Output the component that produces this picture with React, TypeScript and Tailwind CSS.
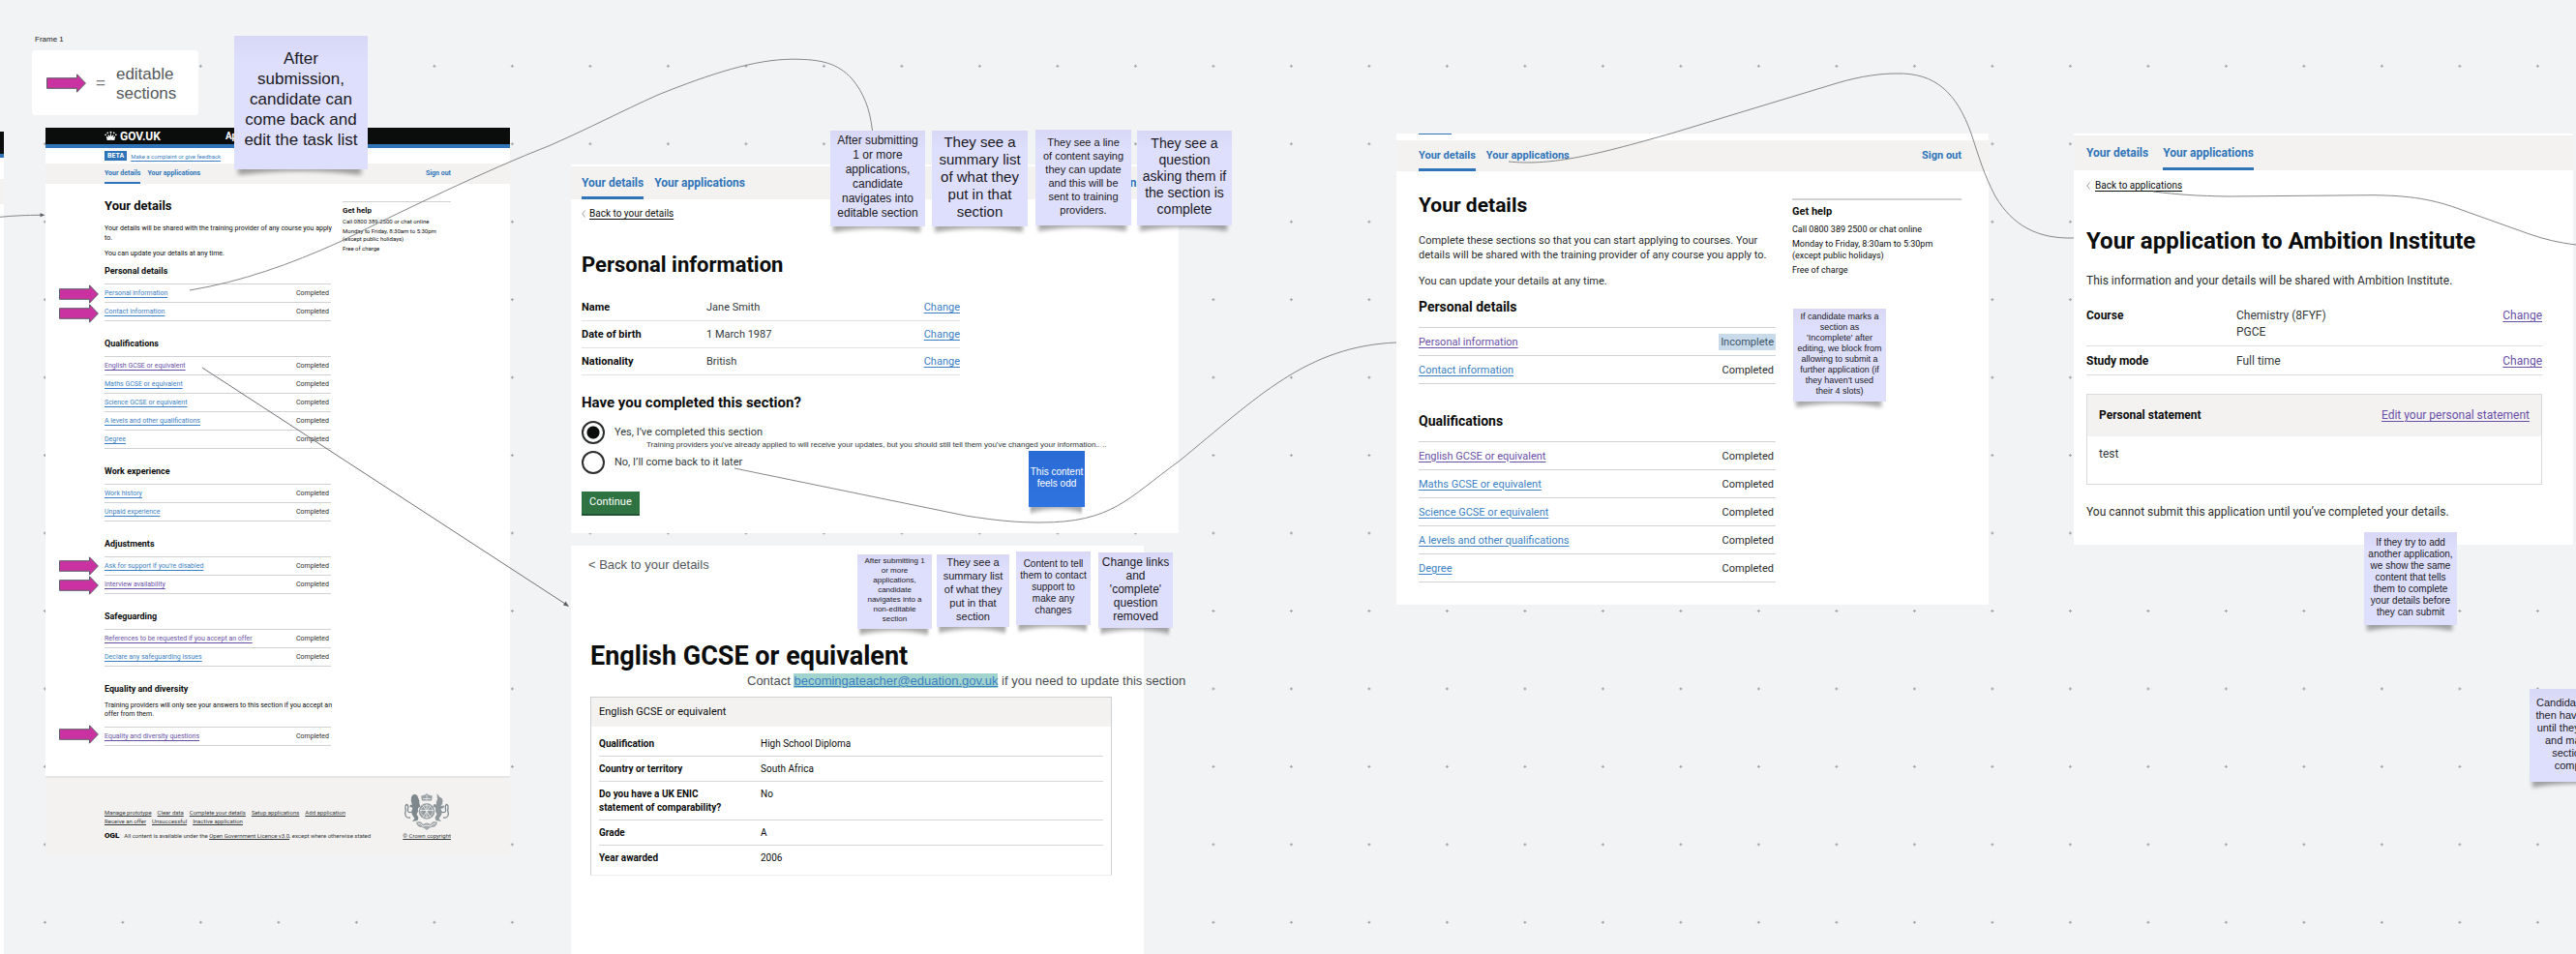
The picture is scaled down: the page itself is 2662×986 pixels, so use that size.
import type { ReactNode } from "react";

const link = "text-[#3b7fc4] underline underline-offset-2";
const visited = "text-[#6a4fa8] underline underline-offset-2";

type Task = { name: string; seen?: boolean; status?: string };

/* ---------- board furniture ---------- */

function Grid() {
  return (
    <svg className="absolute inset-0 h-full w-full" aria-hidden="true">
      <defs>
        <pattern id="plus" width="80.5" height="80.45" patternUnits="userSpaceOnUse" x="6.1" y="28.1">
          <path d="M38.8 40.2h3M40.3 38.7v3" stroke="#9a9da1" strokeWidth="1" />
        </pattern>
      </defs>
      <rect width="100%" height="100%" fill="url(#plus)" />
    </svg>
  );
}

function Arrow({ className }: { className: string }) {
  return (
    <svg className={className} viewBox="0 0 41 20" aria-hidden="true">
      <path d="M.5 4.7H31.5V.8L40.4 10L31.5 19.2V15.3H.5Z" fill="#c932a0" stroke="#5b5f66" strokeWidth="1" />
    </svg>
  );
}

function Note({ place, text, tone = "lilac", pad = "pb-[3px]" }: { place: string; text: string; tone?: "lilac" | "blue"; pad?: string }) {
  const paper =
    tone === "blue"
      ? "bg-linear-to-b from-[#2a6ad4] to-[#2f74e0] text-white"
      : "bg-linear-to-b from-[#d8d8f6] to-[#dedefd] to-20% text-[#1a1a24]";
  return (
    <div className={`absolute ${place}`}>
      <svg className="absolute -bottom-3 left-0 h-5 w-full overflow-visible" viewBox="0 0 100 20" preserveAspectRatio="none" aria-hidden="true">
        <path d="M3 0H95V14Q50 6 3 14Z" fill="#000" opacity="0.34" style={{ filter: "blur(2px)" }} />
      </svg>
      <div className={`relative flex h-full items-center justify-center whitespace-pre text-center ${pad} ${paper}`}>
        <p>{text}</p>
      </div>
    </div>
  );
}

function Connectors() {
  return (
    <svg className="pointer-events-none absolute inset-0 h-full w-full" fill="none" stroke="#85878a" strokeWidth="1" aria-hidden="true">
      <path d="M0 224.3C15 222.8 28 222.4 42 222.3" />
      <path d="M46.5 222.3L41.5 220.3V224.3Z" fill="#5b5f66" stroke="none" />
      <path d="M196 300C250 291 300 273 350 250.500C420 216 500 177 569 150C610 132 640 116 680 98C735 76 780 61.500 818 61.200C850 61 866 66 880 81C892 95 899 112 901.500 135" />
      <path d="M209 380L584 624" stroke="#6f7276" />
      <path d="M588 627L582 625.500L584.500 621.500Z" fill="#5b5f66" stroke="none" />
      <path d="M759 484L998 533C1030 538 1050 540 1075 540C1150 540 1165 515 1218 477C1300 410 1350 358 1443 354" />
      <path d="M1559 167C1600 171 1640 163 1730 137L1898 86C1925 78 1945 76 1960 76C2000 75 2022 96 2037 138C2046 165 2050 180 2062 203C2080 233 2105 247 2143 246" />
      <path d="M2225 198C2250 201 2270 202.500 2303 203L2451 201.700C2490 202 2515 206 2544 217L2614 242C2630 247.500 2645 251 2662 253" />
    </svg>
  );
}

function CoatOfArms() {
  return (
    <svg className="h-10 w-12" viewBox="0 0 48 40" fill="#7d878c" aria-hidden="true">
      <path d="M19 8.500L18.200 4.500Q18.500 2.600 20.500 3.200Q22 1.800 23.400 2.500V1H24.600V2.500Q26 1.800 27.500 3.200Q29.500 2.600 29.800 4.500L29 8.500Z" opacity=".75" />
      <path d="M20 6.500h8M24 3v5" stroke="#f3f2f1" strokeWidth=".7" />
      <circle cx="24" cy="19.500" r="8.300" opacity=".8" />
      <path d="M24 12v15M17 18.500h14M20 13.500l8 12M28 13.500l-8 12" stroke="#f3f2f1" strokeWidth=".8" />
      <circle cx="24" cy="19.500" r="6.200" fill="none" stroke="#f3f2f1" strokeWidth=".6" />
      <path d="M8 5Q9 1.800 11.500 2Q14.500 2 15 5.500Q17 8 16.500 12L17.500 14.500L15 16Q15.500 20 13.500 22.500L15.500 26L14.500 29L9 30L11.500 27L9 23Q7.500 20 9.500 16L6 14.500L7.500 12.500L9 13Q7 9 8 5Z" />
      <path d="M9 20Q3.500 22 4.500 17Q5.500 13 3 12.500Q1.500 13.500 2 16Q2.800 19 1.600 21.500Q2 27 7 26" fill="none" stroke="#7d878c" strokeWidth="1.300" />
      <path d="M34.500 1L37.500 5Q40.500 5.500 40.500 9Q40.500 12 38.500 14L42 13.500L41.500 16L38.500 17Q40.500 20.500 39 23.500L36.500 27L39 30L33.500 29L32.500 26L34.500 22.500Q32.500 20 33 16L30.500 14.500L31.500 12L34 12.500Q33.500 9.500 35 7Z" opacity=".85" />
      <path d="M39 20Q44.500 22 43.500 17Q42.500 13 45 12.500Q46.500 13.500 46 16Q45.200 19 46.400 21.500Q46 27 41 26" fill="none" stroke="#7d878c" strokeWidth="1.300" />
      <path d="M13 31Q18 28.500 20 33Q24 30 28 33Q30 28.500 35 31Q34 36 29 36Q26 37 24 39Q22 37 19 36Q14 36 13 31Z" opacity=".7" />
      <path d="M15 32Q18 32 20 35Q24 33 28 35Q30 32 33 32" fill="none" stroke="#f3f2f1" strokeWidth=".9" />
    </svg>
  );
}

function Crown() {
  return (
    <svg className="h-[11px] w-[13px]" viewBox="0 0 26 22" fill="#fff" aria-hidden="true">
      <circle cx="13" cy="3.500" r="2" />
      <circle cx="6.500" cy="4.500" r="1.700" />
      <circle cx="19.500" cy="4.500" r="1.700" />
      <circle cx="2.300" cy="8.500" r="1.700" />
      <circle cx="23.700" cy="8.500" r="1.700" />
      <path d="M3.500 11L5.500 20Q13 18.500 20.500 20L22.500 11L17.500 14L19.500 7.500L14 12L13.800 6.500H12.200L12 12L6.500 7.500L8.500 14Z" />
    </svg>
  );
}

/* ---------- shared page parts ---------- */

function Tabs({ active, className, tab, signOut, bar = "h-[3px]" }: { active: 0 | 1; className: string; tab: string; signOut?: ReactNode; bar?: string }) {
  return (
    <nav className={`flex items-stretch bg-[#f3f2f1] font-bold text-[#2f74b8] ${className}`}>
      <div className={`flex flex-1 ${tab}`}>
        {["Your details", "Your applications"].map((label, i) => (
          <a key={label} href="#" className="relative flex items-center">
            {label}
            {i === active && <span className={`absolute inset-x-0 bottom-0 bg-[#2f74b8] ${bar}`} />}
          </a>
        ))}
      </div>
      {signOut}
    </nav>
  );
}

function TaskList({ title, tasks, intro, heading, row, introClass = "" }: { title: string; tasks: Task[]; intro?: string; heading: string; row: string; introClass?: string }) {
  return (
    <section>
      <h2 className={`font-bold ${heading}`}>{title}</h2>
      {intro && <p className={introClass}>{intro}</p>}
      <ul className="border-t border-[#cfd1d2]">
        {tasks.map((t) => (
          <li key={t.name} className={`flex items-center justify-between border-b border-[#cfd1d2] ${row}`}>
            <a href="#" className={t.seen ? visited : link}>
              {t.name}
            </a>
            {t.status ? (
              <span className="bg-[#c9dbeb] px-0.5 py-px text-[#3d5468]">{t.status}</span>
            ) : (
              <span className="pr-0.5 text-[#2b2d2e]">Completed</span>
            )}
          </li>
        ))}
      </ul>
    </section>
  );
}

function BackLink({ children, className }: { children: string; className: string }) {
  return (
    <a href="#" className={`flex items-center ${className}`}>
      <svg className="h-2 w-1" viewBox="0 0 4 8" fill="none" stroke="#9a9da1" aria-hidden="true">
        <path d="M3.500 .5L.8 4L3.500 7.500" />
      </svg>
      <span className="underline underline-offset-2">{children}</span>
    </a>
  );
}

const personal: Task[] = [{ name: "Personal information" }, { name: "Contact information" }];
const qualifications: Task[] = [
  { name: "English GCSE or equivalent", seen: true },
  { name: "Maths GCSE or equivalent" },
  { name: "Science GCSE or equivalent" },
  { name: "A levels and other qualifications" },
  { name: "Degree" },
];

/* ---------- screens ---------- */

function TaskListPage() {
  const heading = "mt-[17px] mb-[7px] text-[9px] leading-[12px]";
  const row = "h-[19px] text-[7px]";
  return (
    <article className="absolute top-[132px] left-[47px] w-[480px] bg-white font-[Roboto,sans-serif] text-[#0b0c0c]">
      <header className="flex h-[21px] items-center border-b-4 border-[#2f74b8] bg-[#0b0c0c] pl-[61px] text-[12px] leading-none font-bold text-white">
        <Crown />
        <span className="w-[112px] pl-[3px]">GOV.UK</span>
        <span className="text-[10px]">Apply</span>
      </header>
      <div className="flex h-4 items-center gap-1 pl-[61px]">
        <strong className="bg-[#2f74b8] px-[3px] text-[7px] leading-[10px] text-white">BETA</strong>
        <a href="#" className={`text-[6px] ${link}`}>
          Make a complaint or give feedback
        </a>
      </div>
      <Tabs
        active={0}
        className="h-[21px] pr-[61px] pl-[61px] text-[7px]"
        tab="gap-[7px]"
        bar="h-0.5"
        signOut={<a href="#" className="flex items-center">Sign out</a>}
      />
      <div className="flex justify-between px-[61px] pb-[31px]">
        <div className="w-[234px] pt-[15px] text-[7px]">
          <h1 className="text-[13px] leading-[16px] font-bold">Your details</h1>
          <p className="mt-[10px] leading-[10px] whitespace-nowrap">
            Your details will be shared with the training provider of any course you apply
            <br />
            to.
          </p>
          <p className="mt-[6px] leading-[10px]">You can update your details at any time.</p>
          <TaskList title="Personal details" tasks={personal} heading="mt-[7px] mb-[7px] text-[9px] leading-[12px]" row={row} />
          <TaskList title="Qualifications" tasks={qualifications} heading={heading} row={row} />
          <TaskList title="Work experience" tasks={[{ name: "Work history" }, { name: "Unpaid experience" }]} heading={heading} row={row} />
          <TaskList
            title="Adjustments"
            tasks={[{ name: "Ask for support if you’re disabled" }, { name: "Interview availability", seen: true }]}
            heading={heading}
            row={row}
          />
          <TaskList
            title="Safeguarding"
            tasks={[{ name: "References to be requested if you accept an offer", seen: true }, { name: "Declare any safeguarding issues" }]}
            heading={heading}
            row={row}
          />
          <TaskList
            title="Equality and diversity"
            intro={"Training providers will only see your answers to this section if you accept an\noffer from them."}
            introClass="mb-[8px] whitespace-pre leading-[9px]"
            tasks={[{ name: "Equality and diversity questions", seen: true }]}
            heading={heading}
            row={row}
          />
        </div>
        <aside className="w-[112px] pt-[18px] text-[6px] leading-[8px]">
          <h2 className="border-t border-[#cfd1d2] pt-1 text-[8px] leading-[9px] font-bold">Get help</h2>
          <p className="mt-[3px]">Call 0800 389 2500 or chat online</p>
          <p className="mt-0.5">
            Monday to Friday, 8:30am to 5:30pm
            <br />
            (except public holidays)
          </p>
          <p className="mt-0.5">Free of charge</p>
        </aside>
      </div>
      <footer className="flex h-[82px] justify-between border-t-2 border-[#e6e6e6] bg-[#f3f2f1] px-[61px] text-[6px] whitespace-nowrap text-[#33383b]">
        <div className="pt-[31px]">
          <ul className="flex w-[256px] flex-wrap gap-x-[6px] leading-[9px]">
            {["Manage prototype", "Clear data", "Complete your details", "Setup applications", "Add application", "Receive an offer", "Unsuccessful", "Inactive application"].map((t) => (
              <li key={t}>
                <a href="#" className="underline underline-offset-1">
                  {t}
                </a>
              </li>
            ))}
          </ul>
          <p className="mt-[6px] flex items-center gap-[5px] leading-[9px]">
            <strong className="text-[8px] font-black text-black">OGL</strong>
            <span>
              All content is available under the{" "}
              <a href="#" className="underline underline-offset-1">
                Open Government Licence v3.0
              </a>
              , except where otherwise stated
            </span>
          </p>
        </div>
        <div className="flex flex-col items-center pt-[15px]">
          <CoatOfArms />
          <a href="#" className="leading-[9px] underline underline-offset-1">
            © Crown copyright
          </a>
        </div>
      </footer>
    </article>
  );
}

function PersonalInformationPage() {
  return (
    <article className="absolute top-[170px] left-[590px] w-[628px] bg-white pt-0.5 pb-[18px] font-[Roboto,sans-serif] text-[#0b0c0c]">
      <Tabs
        active={0}
        className="h-[34px] pr-[23px] pl-[11px] text-[12px]"
        tab="gap-[11px]"
        signOut={<a href="#" className="flex items-center">Sign out</a>}
      />
      <div className="px-[11px]">
        <BackLink className="mt-[9px] gap-1 text-[10px] leading-[12px]">Back to your details</BackLink>
        <h1 className="mt-[35px] text-[22px] leading-[24px] font-bold">Personal information</h1>
        <dl className="mt-[18px] w-[391px] text-[11px]">
          {[
            ["Name", "Jane Smith"],
            ["Date of birth", "1 March 1987"],
            ["Nationality", "British"],
          ].map(([k, v]) => (
            <div key={k} className="flex h-7 items-center border-b border-[#e0e1e2] pt-0.5">
              <dt className="w-[129px] font-bold">{k}</dt>
              <dd className="flex-1 text-[#33383b]">{v}</dd>
              <dd>
                <a href="#" className={link}>
                  Change
                </a>
              </dd>
            </div>
          ))}
        </dl>
        <fieldset className="mt-[19px] text-[11px] text-[#33383b]">
          <legend className="text-[15px] leading-[18px] font-bold text-[#0b0c0c]">Have you completed this section?</legend>
          <div className="mt-[10px] flex flex-col gap-[7px]">
            {["Yes, I’ve completed this section", "No, I’ll come back to it later"].map((t, i) => (
              <label key={t} className="flex items-center gap-[10px]">
                <input
                  type="radio"
                  name="complete"
                  defaultChecked={i === 0}
                  className="size-6 appearance-none rounded-full border-2 border-[#2b2d2e] checked:bg-[radial-gradient(circle,#0b0c0c_6px,transparent_7px)]"
                />
                {t}
              </label>
            ))}
          </div>
        </fieldset>
        <button type="button" className="mt-[18px] h-[25px] border-b-2 border-[#1f5331] bg-[#2f7342] px-2 text-[11px] text-white">
          Continue
        </button>
      </div>
    </article>
  );
}

function EnglishGcsePage() {
  return (
    <article className="absolute top-[564px] bottom-0 left-[590px] w-[592px] bg-white pt-[12px] pr-[33px] pl-5 font-[Roboto,sans-serif] text-[#0b0c0c]">
      <a href="#" className="-ml-0.5 block font-[Liberation_Sans,sans-serif] text-[13px] leading-[16px] text-[#55585c]">
        &lt; Back to your details
      </a>
      <h1 className="mt-[71px] text-[27px] leading-[30px] font-bold">English GCSE or equivalent</h1>
      <section className="mt-[27px] border border-[#cfd1d2] border-b-[#eeeeee] pb-[5px] text-[10px] leading-[14px]">
        <h2 className="bg-[#f3f2f1] px-2 py-2 text-[11px]">English GCSE or equivalent</h2>
        <dl className="mx-2 mt-[5px]">
          {[
            ["Qualification", "High School Diploma"],
            ["Country or territory", "South Africa"],
            ["Do you have a UK ENIC\nstatement of comparability?", "No"],
            ["Grade", "A"],
            ["Year awarded", "2006"],
          ].map(([k, v]) => (
            <div key={k} className="flex border-b border-[#d5d7d8] pt-[6px] pb-[5px] last:border-b-0">
              <dt className="w-[167px] font-bold whitespace-pre">{k}</dt>
              <dd>{v}</dd>
            </div>
          ))}
        </dl>
      </section>
    </article>
  );
}

function IncompletePage() {
  const row = "h-[29px] text-[11px]";
  return (
    <article className="absolute top-[138px] left-[1443px] w-[612px] bg-white pb-[23px] font-[Roboto,sans-serif] text-[#0b0c0c]">
      <div className="h-[7px] pl-[23px]">
        <div className="h-px w-[34px] bg-[#2f74b8]" />
      </div>
      <Tabs
        active={0}
        className="h-8 pr-7 pl-[23px] text-[11px]"
        tab="gap-[11px]"
        signOut={<a href="#" className="flex items-center">Sign out</a>}
      />
      <div className="flex justify-between pr-7 pl-[23px]">
        <div className="w-[369px] pt-[23px] text-[11px] leading-[15px]">
          <h1 className="text-[21px] leading-[24px] font-bold">Your details</h1>
          <p className="mt-[17px] whitespace-nowrap text-[#2b2d2e]">
            Complete these sections so that you can start applying to courses. Your
            <br />
            details will be shared with the training provider of any course you apply to.
          </p>
          <p className="mt-[12px] text-[#2b2d2e]">You can update your details at any time.</p>
          <TaskList
            title="Personal details"
            tasks={[{ name: "Personal information", seen: true, status: "Incomplete" }, { name: "Contact information" }]}
            heading="mt-[10px] mb-[12px] text-[14px] leading-[18px]"
            row={row}
          />
          <TaskList title="Qualifications" tasks={qualifications} heading="mt-[29px] mb-[12px] text-[14px] leading-[18px]" row={row} />
        </div>
        <aside className="w-[175px] pt-7 text-[9px] leading-[12px]">
          <h2 className="border-t-2 border-[#cfd1d2] pt-[5px] text-[11px] leading-[14px] font-bold">Get help</h2>
          <p className="mt-[5px]">Call 0800 389 2500 or chat online</p>
          <p className="mt-[3px]">
            Monday to Friday, 8:30am to 5:30pm
            <br />
            (except public holidays)
          </p>
          <p className="mt-[3px]">Free of charge</p>
        </aside>
      </div>
    </article>
  );
}

function ApplicationPage() {
  return (
    <article className="absolute top-[138px] left-[2143px] w-[516px] bg-white pt-0.5 pb-[25px] font-[Roboto,sans-serif] text-[#0b0c0c]">
      <Tabs active={1} className="h-9 px-[13px] text-[12px]" tab="gap-[15px]" />
      <div className="pr-8 pl-[13px] text-[12px] leading-[17px]">
        <BackLink className="mt-[9px] gap-[5px] text-[10px] leading-[14px]">Back to applications</BackLink>
        <h1 className="mt-[36px] text-[24px] leading-[28px] font-bold whitespace-nowrap">Your application to Ambition Institute</h1>
        <p className="mt-[18px] leading-[18px] text-[#2b2d2e]">This information and your details will be shared with Ambition Institute.</p>
        <dl className="mt-[12px]">
          {[
            ["Course", "Chemistry (8FYF)\nPGCE"],
            ["Study mode", "Full time"],
          ].map(([k, v]) => (
            <div key={k} className="flex border-b border-[#dcdedf] pt-[7px] pb-[5px]">
              <dt className="w-[155px] font-bold">{k}</dt>
              <dd className="flex-1 whitespace-pre text-[#33383b]">{v}</dd>
              <dd>
                <a href="#" className={visited}>
                  Change
                </a>
              </dd>
            </div>
          ))}
        </dl>
        <section className="mt-[19px] border border-[#d8dadb]">
          <div className="flex h-[43px] items-center justify-between bg-[#f3f2f1] px-3">
            <h2 className="font-bold">Personal statement</h2>
            <a href="#" className={visited}>
              Edit your personal statement
            </a>
          </div>
          <p className="px-3 pt-[10px] pb-[22px] text-[#33383b]">test</p>
        </section>
        <p className="mt-[19px] leading-[18px] text-[#2b2d2e]">You cannot submit this application until you’ve completed your details.</p>
      </div>
    </article>
  );
}

export default function App() {
  return (
    <main className="relative h-screen w-full overflow-hidden bg-[#f1f3f5] font-[Liberation_Sans,Arial,sans-serif]">
      <Grid />

      <div className="absolute top-[136px] bottom-0 left-0 w-1 bg-white">
        <div className="h-[27px] border-b-4 border-[#2f74b8] bg-[#0b0c0c]" />
        <div className="mt-[22px] h-[26px] bg-[#f3f2f1]" />
      </div>

      <div className="absolute top-[36px] left-[33px]">
        <p className="pl-[3px] text-[8px] leading-[10px] text-[#222]">Frame 1</p>
        <div className="mt-[6px] flex h-[67px] w-[172px] items-center rounded-sm bg-white pl-[15px] text-[17px] leading-[20px] text-[#55585c]">
          <Arrow className="h-5 w-[41px]" />
          <span className="pl-[10px] text-[#77797d]">=</span>
          <p className="pt-[3px] pl-[11px]">
            editable
            <br />
            sections
          </p>
        </div>
      </div>

      <TaskListPage />
      <PersonalInformationPage />
      <EnglishGcsePage />
      <IncompletePage />
      <ApplicationPage />

      <Arrow className="absolute top-[294px] left-[61px] h-5 w-[41px]" />
      <Arrow className="absolute top-[314px] left-[61px] h-5 w-[41px]" />
      <Arrow className="absolute top-[575px] left-[61px] h-5 w-[41px]" />
      <Arrow className="absolute top-[595px] left-[61px] h-5 w-[41px]" />
      <Arrow className="absolute top-[749px] left-[61px] h-5 w-[41px]" />

      <Connectors />

      <p className="absolute top-[454px] left-[668px] text-[8px] leading-[12px] whitespace-nowrap text-[#33383b]">
        Training providers you've already applied to will receive your updates, but you should still tell them you've changed your information.. ..
      </p>
      <p className="absolute top-[696px] left-[772px] text-[13px] leading-[16px] whitespace-nowrap text-[#4a4d50]">
        Contact{" "}
        <a href="#" className="bg-[#a3d3cd] text-[#3b82c4] underline">
          becomingateacher@eduation.gov.uk
        </a>{" "}
        if you need to update this section
      </p>

      <Note pad="pb-2" place="top-[37px] left-[242px] h-[138px] w-[138px] text-[17px] leading-[21px]" text={"After\nsubmission,\ncandidate can\ncome back and\nedit the task list"} />
      <Note place="top-[135px] left-[858px] h-[99px] w-[98px] text-[12px] leading-[15px]" text={"After submitting\n1 or more\napplications,\ncandidate\nnavigates into\neditable section"} />
      <Note place="top-[135px] left-[963px] h-[99px] w-[99px] text-[15px] leading-[18px]" text={"They see a\nsummary list\nof what they\nput in that\nsection"} />
      <Note place="top-[134px] left-[1070px] h-[99px] w-[99px] text-[11px] leading-[14px]" text={"They see a line\nof content saying\nthey can update\nand this will be\nsent to training\nproviders."} />
      <Note place="top-[135px] left-[1175px] h-[98px] w-[98px] text-[14px] leading-[17px]" text={"They see a\nquestion\nasking them if\nthe section is\ncomplete"} />
      <Note tone="blue" place="top-[466px] left-[1063px] h-[58px] w-[58px] text-[10px] leading-[12px]" text={"This content\nfeels odd"} />
      <Note place="top-[573px] left-[886px] h-[77px] w-[77px] text-[8px] leading-[10px]" text={"After submitting 1\nor more\napplications,\ncandidate\nnavigates into a\nnon-editable\nsection"} />
      <Note place="top-[573px] left-[968px] h-[75px] w-[75px] text-[11px] leading-[14px]" text={"They see a\nsummary list\nof what they\nput in that\nsection"} />
      <Note place="top-[570px] left-[1050px] h-[76px] w-[77px] text-[10px] leading-[12px]" text={"Content to tell\nthem to contact\nsupport to\nmake any\nchanges"} />
      <Note place="top-[571px] left-[1135px] h-[78px] w-[77px] text-[12px] leading-[14px]" text={"Change links\nand\n'complete'\nquestion\nremoved"} />
      <Note place="top-[319px] left-[1853px] h-[96px] w-[96px] text-[9px] leading-[11px]" text={"If candidate marks a\nsection as\n'Incomplete' after\nediting, we block from\nallowing to submit a\nfurther application (if\nthey haven't used\ntheir 4 slots)"} />
      <Note place="top-[550px] left-[2443px] h-[96px] w-[96px] text-[10px] leading-[12px]" text={"If they try to add\nanother application,\nwe show the same\ncontent that tells\nthem to complete\nyour details before\nthey can submit"} />
      <Note place="top-[712px] left-[2614px] h-[96px] w-[96px] text-[11px] leading-[13px]" text={"Candidate would\nthen have to wait\nuntil they update\nand mark the\nsection as\ncomplete"} />
    </main>
  );
}
